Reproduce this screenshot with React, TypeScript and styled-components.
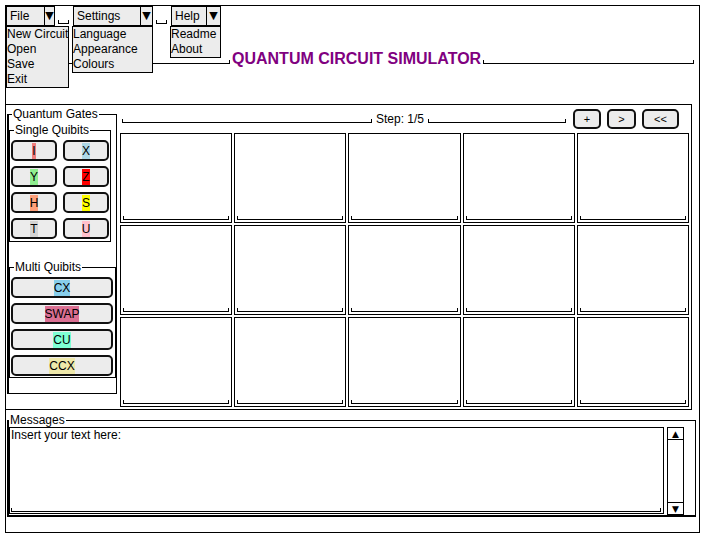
import styled, { createGlobalStyle } from "styled-components";

const GlobalStyle = createGlobalStyle`
  html, body {
    margin: 0;
    padding: 0;
    background: #fff;
  }
  body {
    font-family: "Liberation Sans", Arial, sans-serif;
    font-size: 12px;
    color: #000;
  }
  * {
    box-sizing: border-box;
  }
`;

const Window = styled.div`
  margin: 5px 0 0 5px;
  width: 695px;
  height: 528px;
  border: 1px solid #000;
  display: flex;
  flex-direction: column;
`;

// underline with small end ticks, used all over the Tk layout
const Bracket = styled.div<{ $w?: number }>`
  height: 4px;
  border: 1px solid #000;
  border-top: none;
  ${(p) => (p.$w ? `width: ${p.$w}px; flex: none;` : "flex: 1;")}
`;

/* menu bar */
const MenuBar = styled.div`
  display: flex;
  height: 20px;
  position: relative;
  z-index: 2;
`;
const MenuGroup = styled.div`
  display: flex;
`;
const MenuAnchor = styled.div`
  position: relative;
`;
const MenuButton = styled.div<{ $w: number }>`
  width: ${(p) => p.$w}px;
  height: 20px;
  display: flex;
  border: 1px solid #000;
  background: #ececec;
`;
const MenuLabel = styled.span`
  flex: 1;
  padding-left: 3px;
  line-height: 18px;
`;
const MenuArrow = styled.span<{ $w: number }>`
  width: ${(p) => p.$w}px;
  border-left: 1px solid #000;
  font-family: "DejaVu Sans", sans-serif;
  font-size: 11px;
  line-height: 18px;
  text-align: center;
`;
const MenuSpacer = styled(Bracket)`
  align-self: flex-end;
  margin: 0 4px 2px 3px;
`;
const Dropdown = styled.div<{ $w: number; $dx: number }>`
  position: absolute;
  top: 100%;
  left: ${(p) => p.$dx}px;
  width: ${(p) => p.$w}px;
  background: #ececec;
  border: 1px solid #000;
  overflow: hidden;
  white-space: nowrap;
`;
const DropItem = styled.div`
  line-height: 15px;
`;

/* title */
const TitleRow = styled.div`
  display: flex;
  align-items: flex-end;
  height: 18px;
  margin-top: 24px;
  padding: 0 5px 0 2px;
  ${Bracket} {
    margin-bottom: 4px;
  }
`;
const Title = styled.h1`
  margin: 0 2px;
  font-size: 16px;
  line-height: 18px;
  font-weight: bold;
  color: #800080;
  white-space: nowrap;
`;

/* main section */
const Main = styled.div`
  display: flex;
  width: 686px;
  height: 306px;
  margin-top: 36px;
  border: 1px solid #000;
  border-left: none;
`;

const Frame = styled.fieldset`
  margin: 0;
  padding: 0;
  min-width: 0;
  border: 1px solid #000;
`;
const FrameLabel = styled.legend<{ $indent?: number }>`
  margin-left: ${(p) => p.$indent ?? 3}px;
  padding: 0 1px;
  font-size: 12px;
  line-height: 14px;
`;

const GatesPanel = styled(Frame)`
  align-self: flex-start;
  width: 110px;
  margin: 2px 0 0 1px;
  padding: 2px 0 15px;
  border-left-width: 2px;
`;
const GateGroup = styled(Frame)<{ $w: number }>`
  width: ${(p) => p.$w}px;
  padding: 3px 2px 2px 1px;
  & + & {
    margin-top: 18px;
    padding-bottom: 1px;
  }
`;
const GateGrid = styled.div<{ $cols: number }>`
  display: grid;
  grid-template-columns: repeat(${(p) => p.$cols}, ${(p) => (p.$cols === 1 ? "102px" : "46px")});
  column-gap: 6px;
  row-gap: 5px;
`;
const GateButton = styled.div`
  height: 21px;
  border: 2px solid #111;
  border-radius: 5px;
  background: #ececec;
  display: flex;
  align-items: center;
  justify-content: center;
`;
const GateText = styled.span<{ $bg: string }>`
  background: ${(p) => p.$bg};
  color: #000;
  line-height: 16px;
`;

const Circuit = styled.div`
  flex: 1;
  display: flex;
  flex-direction: column;
`;
const StepBar = styled.div`
  height: 28px;
  display: flex;
  align-items: center;
  padding: 0 12px 0 5px;
  ${Bracket} {
    margin-top: 3px;
  }
`;
const StepText = styled.span`
  margin: 0 4px;
  line-height: 14px;
`;
const StepButton = styled.div<{ $w: number }>`
  width: ${(p) => p.$w}px;
  height: 20px;
  margin-left: ${(p) => (p.$w === 28 ? 7 : 6)}px;
  border: 2px solid #111;
  border-radius: 5px;
  background: #ececec;
  font-size: 11px;
  line-height: 16px;
  text-align: center;
`;
const CellGrid = styled.div`
  display: grid;
  grid-template-columns: repeat(5, 1fr);
  grid-auto-rows: 90px;
  gap: 2px;
  padding: 0 2px 0 3px;
`;
const Cell = styled.div`
  border: 1px solid #000;
  display: flex;
  flex-direction: column;
  justify-content: flex-end;
  padding: 0 2px 2px;
  ${Bracket} {
    flex: none;
  }
`;

/* messages */
const Messages = styled(Frame)`
  width: 689px;
  margin: 3px 0 0 1px;
  padding: 0 10px 0 0;
  border-left-width: 2px;
  border-bottom-width: 2px;
  display: flex;
`;
const TextBox = styled.div`
  width: 655px;
  height: 87px;
  border: 1px solid #000;
  display: flex;
  flex-direction: column;
  justify-content: space-between;
  padding: 0 2px 1px 1px;
  ${Bracket} {
    flex: none;
  }
`;
const Placeholder = styled.span`
  line-height: 14px;
`;
const ScrollBar = styled.div`
  width: 17px;
  height: 88px;
  margin-left: 3px;
  border: 1px solid #000;
  display: flex;
  flex-direction: column;
  justify-content: space-between;
`;
const ScrollArrow = styled.div<{ $down?: boolean }>`
  height: 12px;
  font-family: "DejaVu Sans", sans-serif;
  font-size: 9px;
  line-height: 12px;
  text-align: center;
  ${(p) => (p.$down ? "border-top: 1px solid #000;" : "border-bottom: 1px solid #000;")}
`;

const menus = [
  { name: "File", w: 49, arrow: 10, list: ["New Circuit", "Open", "Save", "Exit"], lw: 63, dx: 0 },
  { name: "Settings", w: 80, arrow: 12, list: ["Language", "Appearance", "Colours"], lw: 81, dx: -1 },
  { name: "Help", w: 50, arrow: 14, list: ["Readme", "About"], lw: 51, dx: -1 },
];

const singleGates = [
  { label: "I", bg: "#f08080" },
  { label: "X", bg: "#add8e6" },
  { label: "Y", bg: "#90ee90" },
  { label: "Z", bg: "#ff0000" },
  { label: "H", bg: "#ffa07a" },
  { label: "S", bg: "#ffff00" },
  { label: "T", bg: "#d3d3d3" },
  { label: "U", bg: "#ffc0cb" },
];

const multiGates = [
  { label: "CX", bg: "#87ceeb" },
  { label: "SWAP", bg: "#db7093" },
  { label: "CU", bg: "#7fffd4" },
  { label: "CCX", bg: "#eee8aa" },
];

function App() {
  return (
    <>
      <GlobalStyle />
      <Window>
        <MenuBar>
          {menus.map((m, i) => (
            <MenuGroup key={m.name}>
              <MenuAnchor>
                <MenuButton $w={m.w}>
                  <MenuLabel>{m.name}</MenuLabel>
                  <MenuArrow $w={m.arrow}>▼</MenuArrow>
                </MenuButton>
                <Dropdown $w={m.lw} $dx={m.dx}>
                  {m.list.map((item) => (
                    <DropItem key={item}>{item}</DropItem>
                  ))}
                </Dropdown>
              </MenuAnchor>
              {i < menus.length - 1 && <MenuSpacer $w={11} />}
            </MenuGroup>
          ))}
        </MenuBar>

        <TitleRow>
          <Bracket $w={222} />
          <Title>QUANTUM CIRCUIT SIMULATOR</Title>
          <Bracket />
        </TitleRow>

        <Main>
          <GatesPanel>
            <FrameLabel>Quantum Gates</FrameLabel>
            <GateGroup $w={102}>
              <FrameLabel>Single Quibits</FrameLabel>
              <GateGrid $cols={2}>
                {singleGates.map((g) => (
                  <GateButton key={g.label}>
                    <GateText $bg={g.bg}>{g.label}</GateText>
                  </GateButton>
                ))}
              </GateGrid>
            </GateGroup>
            <GateGroup $w={107}>
              <FrameLabel>Multi Quibits</FrameLabel>
              <GateGrid $cols={1}>
                {multiGates.map((g) => (
                  <GateButton key={g.label}>
                    <GateText $bg={g.bg}>{g.label}</GateText>
                  </GateButton>
                ))}
              </GateGrid>
            </GateGroup>
          </GatesPanel>

          <Circuit>
            <StepBar>
              <Bracket $w={250} />
              <StepText>Step: 1/5</StepText>
              <Bracket />
              <StepButton $w={28}>+</StepButton>
              <StepButton $w={29}>&gt;</StepButton>
              <StepButton $w={37}>&lt;&lt;</StepButton>
            </StepBar>
            <CellGrid>
              {Array.from({ length: 15 }, (_, i) => (
                <Cell key={i}>
                  <Bracket />
                </Cell>
              ))}
            </CellGrid>
          </Circuit>
        </Main>

        <Messages>
          <FrameLabel $indent={0}>Messages</FrameLabel>
          <TextBox>
            <Placeholder>Insert your text here:</Placeholder>
            <Bracket />
          </TextBox>
          <ScrollBar>
            <ScrollArrow>▲</ScrollArrow>
            <ScrollArrow $down>▼</ScrollArrow>
          </ScrollBar>
        </Messages>
      </Window>
    </>
  );
}

export default App;
